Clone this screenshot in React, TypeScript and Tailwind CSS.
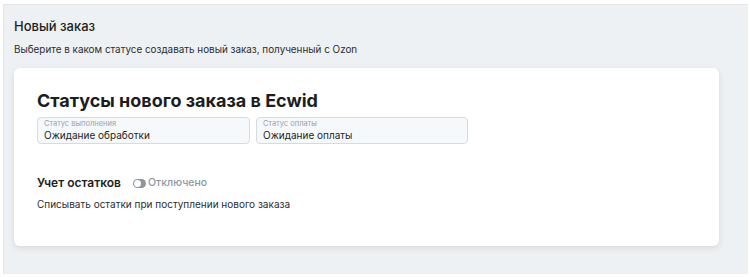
export default function App() {
  return (
    <div className="w-[750px] h-[277px] bg-white pt-[4px] pl-[3px] pr-[2px] pb-[3px] font-['Inter',sans-serif]">
      <div className="h-full bg-[#eef1f4] border-l border-t border-[#e2e6ea] pl-[10px] pr-[29px] pt-[13px]">
        <h2 className="text-[13px] leading-[16px] font-medium text-[#1d1f21]">Новый заказ</h2>
        <p className="mt-[8px] text-[9.9px] leading-[14px] text-[#2a2d31]">
          Выберите в каком статусе создавать новый заказ, полученный с Ozon
        </p>

        <div className="mt-[12px] h-[178px] bg-white rounded-[6px] shadow-[0_2px_6px_rgba(0,0,0,0.10)] pl-[23px] pt-[22px]">
          <h3 className="text-[18px] leading-[22px] font-bold text-[#1b1d20]">
            Статусы нового заказа в Ecwid
          </h3>

          <div className="mt-[5px] flex gap-[6px]">
            <div className="w-[213px] h-[27px] rounded-[4px] border border-[#d6dbe0] bg-[#f6f9fc] pl-[6px] pt-[1px]">
              <div className="text-[7.5px] leading-[10px] text-[#9aa2ab]">Статус выполнения</div>
              <div className="text-[10px] leading-[12px] text-[#1d1f21]">Ожидание обработки</div>
            </div>
            <div className="w-[212px] h-[27px] rounded-[4px] border border-[#d6dbe0] bg-[#f6f9fc] pl-[6px] pt-[1px]">
              <div className="text-[7.5px] leading-[10px] text-[#9aa2ab]">Статус оплаты</div>
              <div className="text-[10px] leading-[12px] text-[#1d1f21]">Ожидание оплаты</div>
            </div>
          </div>

          <div className="mt-[31px] flex items-center">
            <span className="text-[12px] leading-[16px] font-semibold text-[#1d1f21]">Учет остатков</span>
            <span className="ml-[12px] relative w-[13px] h-[9px] rounded-full bg-[#8d959e]">
              <span className="absolute left-[1px] top-[1px] w-[7px] h-[7px] rounded-full bg-white" />
            </span>
            <span className="ml-[2px] text-[10.5px] leading-[14px] font-medium text-[#8d97a3]">Отключено</span>
          </div>

          <p className="mt-[6px] text-[10px] leading-[14px] text-[#2a2d31]">
            Списывать остатки при поступлении нового заказа
          </p>
        </div>
      </div>
    </div>
  );
}
